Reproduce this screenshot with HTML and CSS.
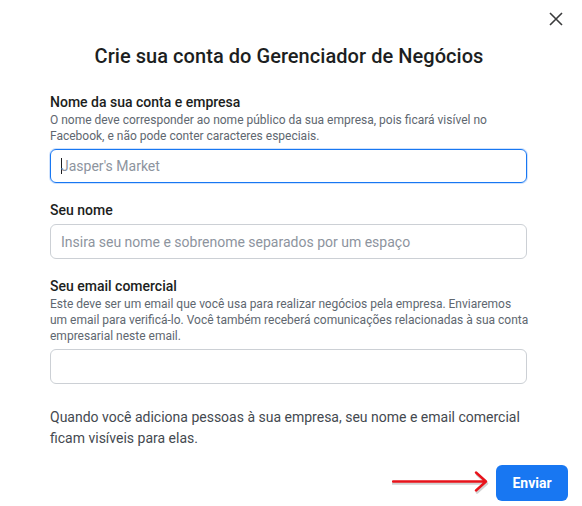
FILE: index.html
```html
<!DOCTYPE html>
<html lang="pt-BR">
<head>
<meta charset="utf-8">
<link rel="stylesheet" href="styles.css">
</head>
<body>
<div class="dialog">
  <div class="close-row">
    <svg class="close" width="14" height="14" viewBox="0 0 14 14"><path d="M1 1L13 13M13 1L1 13" stroke="#3a3b3c" stroke-width="1.6" fill="none"/></svg>
  </div>
  <h1 class="title">Crie sua conta do Gerenciador de Negócios</h1>
  <div class="form">
    <div class="field first">
      <div class="label">Nome da sua conta e empresa</div>
      <div class="desc">O nome deve corresponder ao nome público da sua empresa, pois ficará visível no Facebook, e não pode conter caracteres especiais.</div>
      <div class="input focused"><span class="caret"></span><span class="ph">Jasper's Market</span></div>
    </div>
    <div class="field">
      <div class="label">Seu nome</div>
      <div class="input"><span class="ph">Insira seu nome e sobrenome separados por um espaço</span></div>
    </div>
    <div class="field">
      <div class="label">Seu email comercial</div>
      <div class="desc">Este deve ser um email que você usa para realizar negócios pela empresa. Enviaremos<br>um email para verificá-lo. Você também receberá comunicações relacionadas à sua conta empresarial neste email.</div>
      <div class="input"></div>
    </div>
    <p class="note">Quando você adiciona pessoas à sua empresa, seu nome e email comercial ficam visíveis para elas.</p>
  </div>
  <div class="footer">
    <svg class="arrow" width="100" height="26" viewBox="0 0 100 26">
      <g fill="none" stroke-linecap="round" stroke-linejoin="round">
        <path d="M1 14.5H94M85 5.5L95 14.5L85 23.5" stroke="rgba(0,0,0,0.18)" stroke-width="2.6"/>
        <path d="M1 12.5H93M84 3.5L94 12.5L84 21.5" stroke="#e8131b" stroke-width="2.4"/>
      </g>
    </svg>
    <button class="btn">Enviar</button>
  </div>
</div>
</body>
</html>
```
FILE: styles.css
```css
* { box-sizing: border-box; }
html, body { margin: 0; padding: 0; background: #fff; }
body {
  font-family: Roboto, "Liberation Sans", Arial, sans-serif;
  color: #1c1e21;
  width: 582px;
  height: 506px;
  overflow: hidden;
}
.dialog { display: flex; flex-direction: column; }
.close-row {
  display: flex;
  justify-content: flex-end;
  padding: 12px 19px 0 0;
  height: 26px;
}
.close { display: block; }
.title {
  margin: 18px 0 0;
  padding-right: 4px;
  font-size: 20px;
  line-height: 24px;
  font-weight: 500;
  text-align: center;
  color: #1c1e21;
  letter-spacing: 0.05px;
}
.form { padding: 0 55px 0 50px; }
.field { display: flex; flex-direction: column; margin-top: 18px; }
.field.first { margin-top: 25px; }
.label {
  font-size: 14px;
  line-height: 18px;
  font-weight: 500;
  color: #1c1e21;
}
.desc {
  font-size: 12px;
  line-height: 16px;
  color: #606770;
  margin-top: 1px;
  margin-right: -6px;
}
.input {
  margin-top: 5px;
  height: 35px;
  border: 1px solid #ccd0d5;
  border-radius: 6px;
  display: flex;
  align-items: center;
  padding: 0 10px;
  font-size: 14px;
}
.input.focused {
  border-color: #1877f2;
  box-shadow: 0 0 0 1px #cfe2fd;
  height: 34px;
}
.caret { width: 1px; height: 16px; background: #1c1e21; margin-right: -1px; }
.ph { color: #8d949e; }
.note {
  margin: 23px 0 0;
  font-size: 14px;
  line-height: 21px;
  color: #444950;
}
.footer {
  display: flex;
  justify-content: flex-end;
  align-items: center;
  padding: 16px 14px 0 0;
  gap: 4px;
}
.arrow { display: block; margin-top: -3px; }
.btn {
  width: 72px;
  height: 36px;
  border: none;
  border-radius: 6px;
  background: #1877f2;
  color: #fff;
  font-family: inherit;
  font-size: 14px;
  font-weight: 700;
  padding: 0;
}
```
